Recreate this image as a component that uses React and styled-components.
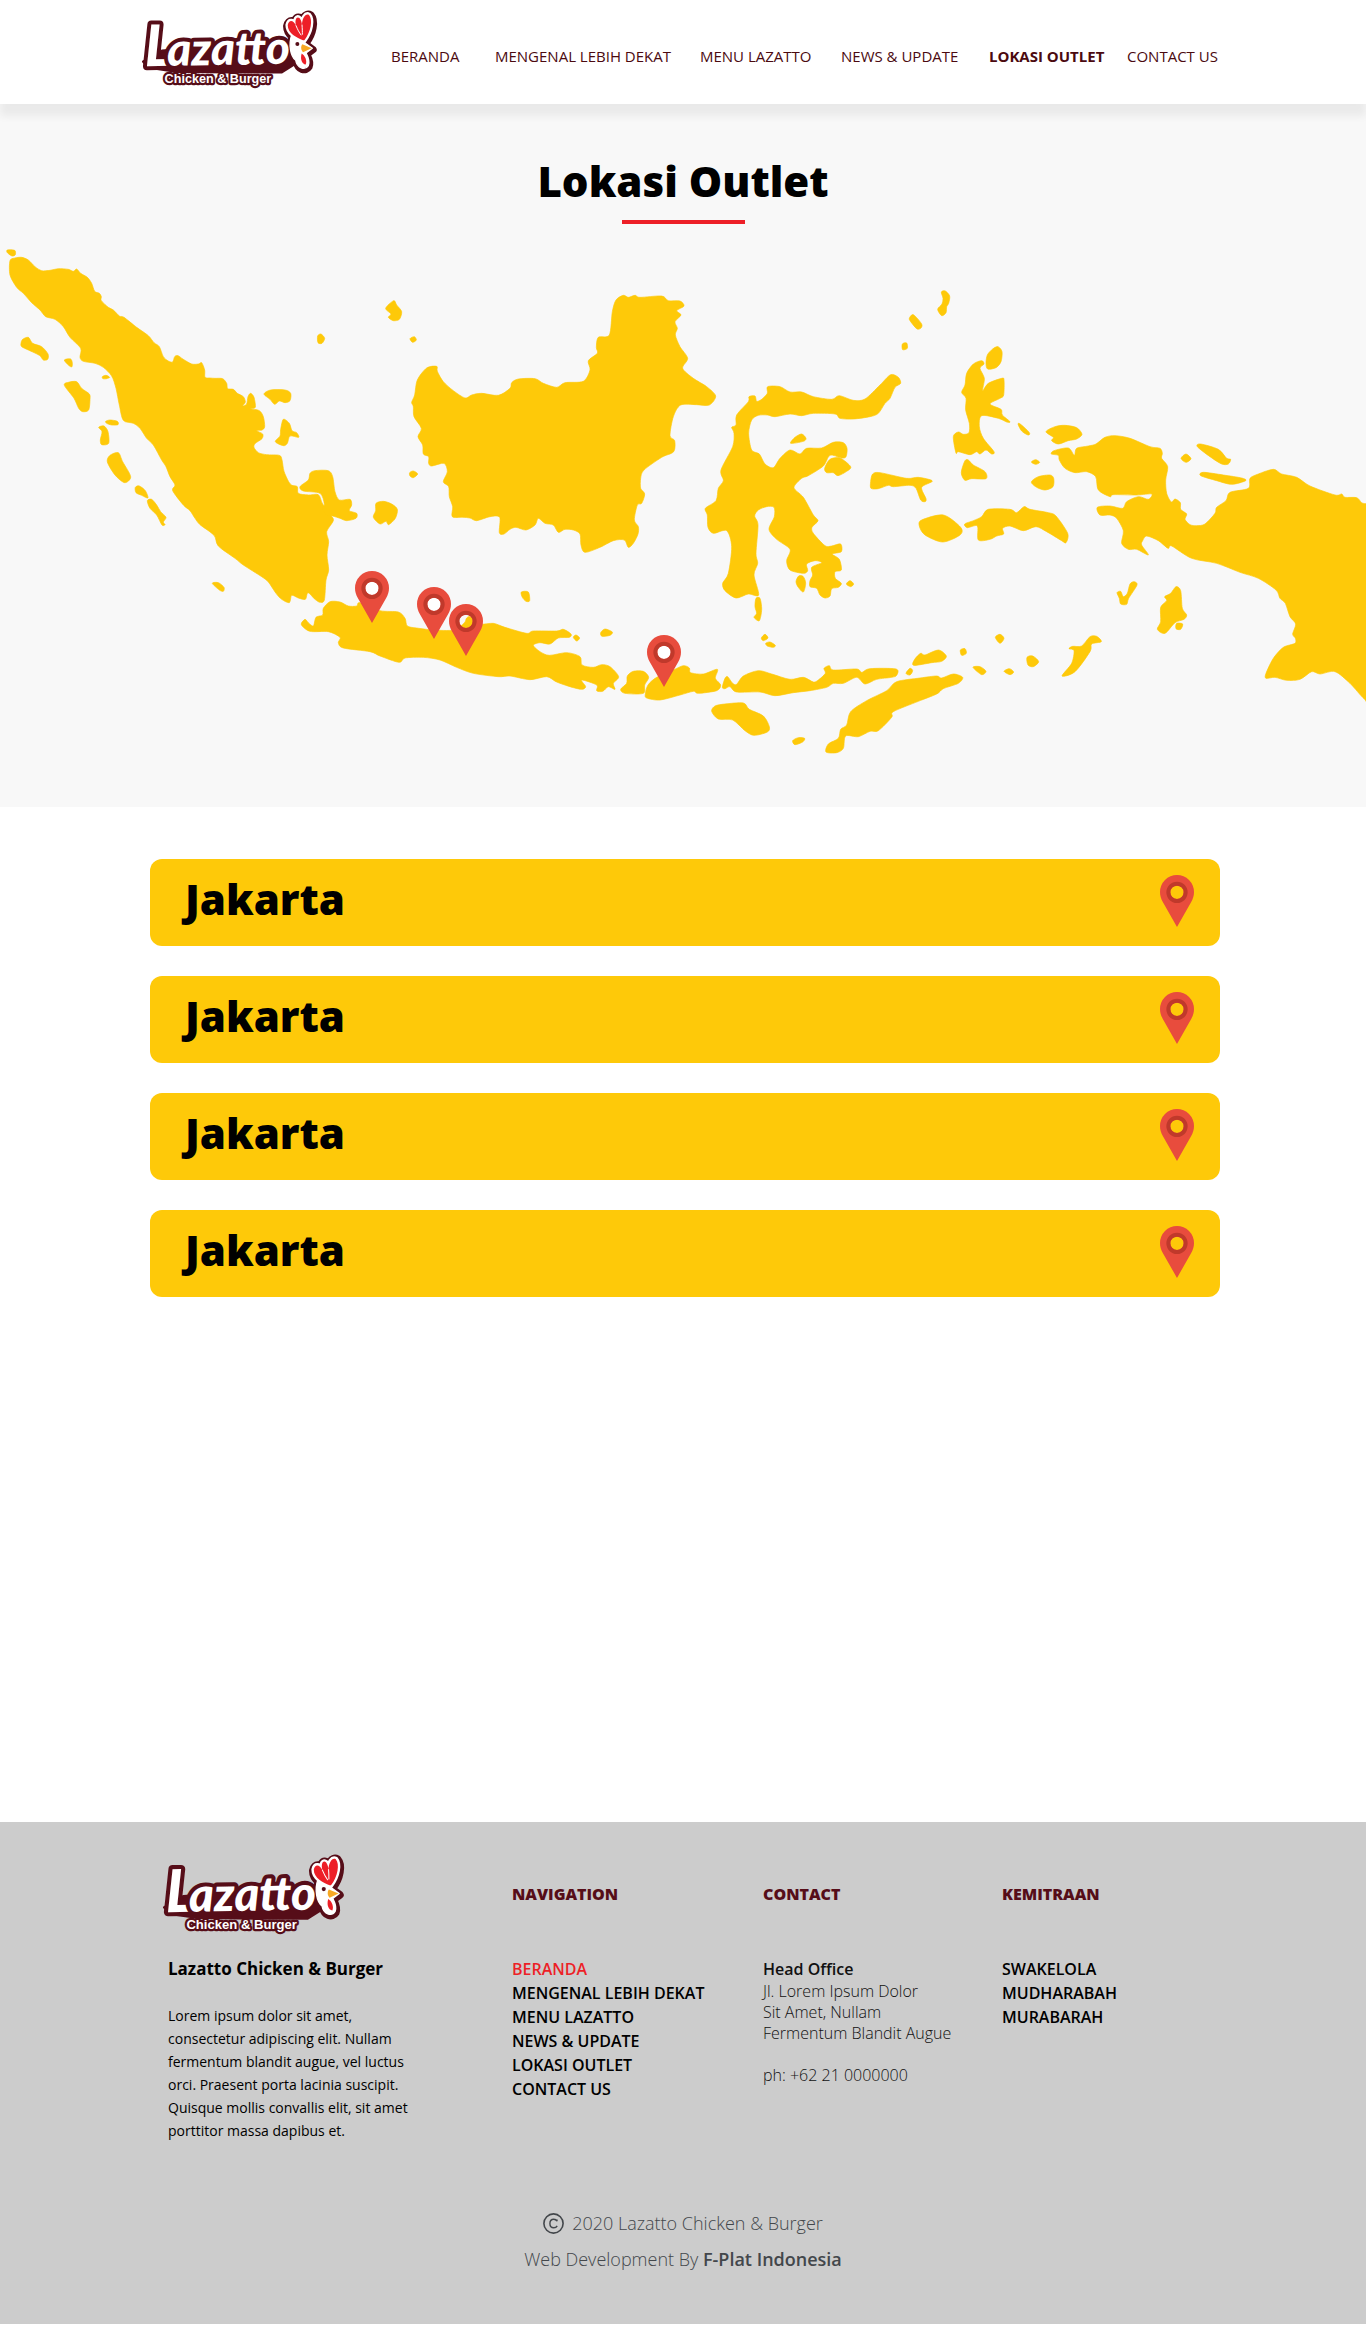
import React from "react";
import styled, { createGlobalStyle } from "styled-components";

const color = {
  yellow: "#fec909",
  maroon: "#4b0a10",
  wine: "#560d18",
  red: "#ed1f27",
  pin: "#e84c3d",
  pinRing: "#c0392b",
  hero: "#f8f8f8",
  footer: "#cccccc",
  slate: "#43474b",
};

const GlobalStyle = createGlobalStyle`
  *, *::before, *::after { box-sizing: border-box; }
  body {
    margin: 0;
    background: #fff;
    color: #000;
    font-family: "Open Sans", "Noto Sans", sans-serif;
  }
  h1, h2, h3, p, ul { margin: 0; padding: 0; }
  ul { list-style: none; }
  a { color: inherit; text-decoration: none; }
`;

const Header = styled.header`
  position: relative;
  z-index: 1;
  display: flex;
  align-items: center;
  justify-content: space-between;
  min-height: 104px;
  padding: 0 150px 0 142px;
  background: #fff;
  box-shadow: 0 12px 8px rgba(0, 0, 0, 0.057);
`;

const LogoLink = styled.a`
  display: block;
  line-height: 0;
`;

const HeaderLogo = styled(LogoLink)`
  padding-bottom: 4px;
`;

const LogoSvg = styled.svg`
  overflow: visible;
`;

const Nav = styled.nav`
  display: grid;
  grid-template-columns: 104px 205px 141px 148px 138px 89px;
  padding-top: 8px;
`;

const NavLink = styled.a`
  color: ${color.maroon};
  font-size: 15px;
  line-height: 20px;
  font-weight: ${(p) => (p.$active ? 700 : 400)};
  white-space: nowrap;
`;

const Hero = styled.section`
  display: flex;
  flex-direction: column;
  align-items: center;
  padding-top: 47px;
  background: ${color.hero};
`;

const Title = styled.h1`
  font-size: 42px;
  line-height: 60px;
  font-weight: 800;
`;

const Underline = styled.div`
  width: 123px;
  height: 4px;
  margin: 9px 0 16px;
  background: ${color.red};
`;

const MapFrame = styled.div`
  position: relative;
  width: 100%;
`;

const MapSvg = styled.svg`
  display: block;
  width: 100%;
  height: auto;
`;

const MapPin = styled.button`
  position: absolute;
  left: ${(p) => p.$x}%;
  top: ${(p) => p.$y}%;
  transform: translate(-50%, -100%);
  padding: 0;
  border: 0;
  background: none;
  line-height: 0;
  cursor: pointer;
`;

const Outlets = styled.main`
  display: flex;
  flex-direction: column;
  gap: 30px;
  padding: 52px 146px 525px 150px;
`;

const OutletRow = styled.button`
  display: flex;
  align-items: center;
  justify-content: space-between;
  width: 100%;
  height: 87px;
  padding: 0 26px 4px 35px;
  border: 0;
  border-radius: 12px;
  background: ${color.yellow};
  color: #000;
  font: 800 42px/60px "Open Sans", "Noto Sans", sans-serif;
  text-align: left;
  cursor: pointer;
`;

const OutletName = styled.span`
  padding-bottom: 4px;
`;

const Footer = styled.footer`
  background: ${color.footer};
  padding: 33px 146px 47px 163px;
`;

const FooterColumns = styled.div`
  display: grid;
  grid-template-columns: 349px 251px 239px 1fr;
  min-height: 308px;
`;

const About = styled.div`
  padding-right: 80px;
`;

const AboutText = styled.div`
  padding-left: 5px;
`;

const Brand = styled.h3`
  margin-top: 21px;
  font-size: 17px;
  line-height: 24px;
  font-weight: 700;
  white-space: nowrap;
`;

const Blurb = styled.p`
  width: 250px;
  margin-top: 23px;
  font-size: 14px;
  line-height: 23px;
`;

const FooterHeading = styled.h2`
  margin: 27px 0 51px;
  color: ${color.wine};
  font-size: 16px;
  line-height: 24px;
  font-weight: 800;
`;

const FooterLink = styled.a`
  display: block;
  color: ${(p) => (p.$active ? color.red : "#000")};
  font-size: 16px;
  line-height: 24px;
  font-weight: 600;
  white-space: nowrap;
`;

const Address = styled.address`
  color: #111;
  font-size: 16px;
  line-height: 21px;
  font-style: normal;
  font-weight: 300;
`;

const Office = styled.h3`
  font-size: 16px;
  line-height: 24px;
  font-weight: 600;
`;

const Phone = styled.p`
  margin-top: 21px;
`;

const Legal = styled.div`
  display: flex;
  flex-direction: column;
  align-items: center;
  padding: 42px 17px 0 0;
  color: ${color.slate};
  font-size: 18px;
  line-height: 36px;
  font-weight: 300;
`;

const LegalLine = styled.p`
  display: flex;
  align-items: center;
  gap: 8px;
`;

const Strong = styled.strong`
  font-weight: 600;
`;

/* Closed Catmull-Rom curve through a list of "x,y" points. */
const smooth = (list) => {
  const pts = list.split(" ").map((p) => p.split(",").map(Number));
  const n = pts.length;
  const at = (i) => pts[(i + n) % n];
  let d = `M${pts[0].join(" ")}`;
  for (let i = 0; i < n; i += 1) {
    const [a, b, c, e] = [at(i - 1), at(i), at(i + 1), at(i + 2)];
    const c1 = [b[0] + (c[0] - a[0]) / 7, b[1] + (c[1] - a[1]) / 7];
    const c2 = [c[0] - (e[0] - b[0]) / 7, c[1] - (e[1] - b[1]) / 7];
    d += `C${c1.join(" ")} ${c2.join(" ")} ${c.join(" ")}`;
  }
  return `${d}Z`;
};

/* Island groups, drawn at three times the map's own unit. */
const regions = [
  {
    origin: [0, 230],
    shapes: [
      "30,92 45,84 65,82 85,90 105,110 125,122 150,121 175,116 205,118 220,124 230,117 242,130 262,142 275,160 284,184 298,190 304,200 304,212 325,232 340,240 358,258 372,262 410,292 445,317 462,338 478,350 490,380 505,393 518,396 524,380 534,377 550,388 575,402 595,402 605,398 614,420 615,442 630,444 645,445 668,446 680,460 683,476 700,478 712,490 730,500 736,516 728,528 740,522 744,500 752,490 762,502 766,532 752,536 778,542 790,560 794,590 786,600 770,602 788,612 786,626 766,640 762,652 775,668 800,674 838,676 846,690 852,724 866,755 876,766 892,770 895,790 925,795 955,794 968,822 992,855 1000,872 980,905 986,935 981,975 986,1020 978,1050 973,1110 960,1117 945,1108 924,1088 916,1108 895,1104 875,1096 868,1118 845,1108 828,1090 805,1056 785,1040 730,1005 705,985 655,948 642,916 600,884 585,865 570,842 550,825 518,782 525,765 510,740 498,710 485,690 460,645 440,625 420,595 400,580 370,571 358,525 348,475 335,438 310,412 285,400 250,394 240,382 242,355 210,322 190,290 165,268 137,260 120,240 95,218 70,190 50,172 30,135",
      "22,60 44,61 46,74 36,78 22,68",
      "63,340 68,328 85,322 98,340 125,350 144,372 143,388 130,390 118,376 85,360 65,350",
      "193,390 212,387 217,400 215,411 205,405",
      "307,440 318,436 329,442 320,446 309,446",
      "193,466 205,457 230,455 245,475 268,492 270,508 266,540 248,545 236,535 222,505",
      "317,574 330,570 352,574 354,584 335,585 320,580",
      "296,592 312,588 324,605 326,640 305,644 301,630 306,605",
      "330,676 355,668 368,695 392,740 374,758 345,735 322,696",
      "406,772 418,768 436,782 444,804 425,796 408,788",
      "442,812 455,808 470,825 482,845 498,862 490,876 495,884 486,885 470,855 450,835",
      "637,1060 655,1058 672,1072 670,1084 658,1080",
      "953,318 963,312 974,325 966,340 954,338",
      "792,492 812,480 855,480 872,490 870,512 855,518 838,513 824,523 810,508",
      "850,568 868,580 876,602 890,608 896,622 870,618 862,640 850,647 826,635 840,618 842,598",
    ],
  },
  {
    origin: [280, 270],
    shapes: [
      "60,650 85,630 90,610 105,602 145,602 158,620 165,665 178,690 210,688 215,705 208,722 230,730 228,745 200,752 180,745 158,738 140,735 128,716 133,702 120,670 70,663",
      "317,115 341,92 350,105 365,125 358,148 340,152 325,142 333,132",
      "390,206 403,200 409,210 398,217",
      "389,608 400,603 413,612 400,623 390,618",
      "288,700 310,694 335,702 352,718 346,745 326,764 318,754 300,762 280,742 287,722",
      "440,294 470,289 472,304 490,335 520,362 555,384 575,375 605,370 655,376 690,355 695,338 715,327 765,326 790,340 830,352 855,338 910,334 930,300 925,272 952,250 949,232 955,202 988,195 997,125 1008,90 1030,76 1045,82 1065,76 1080,82 1145,78 1165,92 1200,93 1212,108 1190,122 1203,135 1185,155 1192,175 1186,195 1200,230 1223,265 1208,295 1240,325 1280,350 1307,378 1288,405 1250,404 1202,405 1180,440 1170,497 1184,512 1181,545 1145,562 1092,600 1082,625 1082,655 1094,672 1085,700 1072,705 1063,750 1075,770 1074,792 1060,820 1045,832 1033,810 1000,812 960,832 915,847 903,825 900,792 880,780 855,778 835,787 820,765 795,760 775,745 765,765 738,780 708,772 690,778 672,792 658,788 659,742 630,740 590,752 570,744 548,742 517,740 518,710 508,680 506,650 490,635 502,605 492,580 455,588 446,580 446,560 430,552 428,525 414,500 424,475 402,440 400,410 395,397 404,375 412,330",
      "150,995 180,996 205,1008 230,1008 240,998 300,1022 355,1026 375,1045 382,1068 410,1074 460,1080 520,1080 552,1060 560,1044 572,1040 600,1062 640,1060 675,1072 740,1090 760,1083 830,1083 850,1078 873,1092 868,1102 835,1104 810,1122 780,1118 760,1126 780,1145 808,1156 860,1148 900,1160 906,1185 940,1192 965,1184 990,1190 1016,1220 1000,1240 1005,1258 985,1250 968,1264 950,1262 950,1245 905,1230 917,1250 905,1258 870,1250 830,1236 800,1220 750,1229 690,1218 655,1220 580,1210 530,1192 480,1170 430,1162 375,1164 357,1177 300,1158 270,1145 190,1134 175,1118 180,1102 145,1085 90,1084 64,1064 75,1048 85,1058 100,1068 108,1042 128,1035 130,1015",
      "724,966 745,966 749,992 738,994 727,982",
      "880,1102 888,1095 899,1104 890,1113",
      "962,1088 975,1077 997,1086 990,1096 966,1099",
      "1022,1258 1040,1240 1042,1218 1060,1204 1090,1204 1106,1222 1094,1245 1090,1270 1035,1270",
      "1096,1272 1104,1245 1130,1222 1180,1200 1210,1187 1228,1194 1232,1208 1270,1212 1312,1198 1306,1225 1322,1245 1310,1262 1255,1270 1240,1264 1200,1275 1140,1290 1100,1284",
    ],
  },
  {
    origin: [680, 270],
    shapes: [
      "127,1252 135,1225 143,1220 158,1240 170,1243 190,1218 235,1202 275,1212 330,1228 370,1222 400,1236 415,1230 436,1210 432,1195 448,1187 460,1200 530,1197 545,1207 570,1196 648,1197 650,1216 635,1222 590,1228 555,1242 530,1222 490,1240 460,1240 440,1252 390,1262 340,1268 285,1277 240,1266 170,1266 150,1250 135,1256",
      "95,1324 105,1308 135,1302 190,1299 208,1318 250,1338 268,1370 262,1386 222,1396 195,1382 158,1350 115,1347",
      "338,1412 355,1403 374,1405 368,1416 345,1424",
      "438,1446 445,1422 475,1405 482,1378 500,1365 512,1325 560,1292 620,1262 650,1235 720,1224 770,1218 785,1224 820,1212 848,1222 835,1240 790,1256 770,1272 715,1294 640,1325 635,1342 595,1382 570,1384 535,1400 497,1398 490,1435 470,1448",
      "678,1210 690,1195 698,1202 690,1215",
      "701,1186 704,1168 722,1150 735,1155 775,1140 799,1158 785,1174 755,1178",
      "841,1140 855,1136 859,1150 845,1156",
      "879,1192 900,1190 918,1204 905,1214",
      "946,1102 960,1093 972,1105 960,1120",
      "972,1204 988,1196 1001,1206 990,1214",
      "263,350 300,350 330,366 365,366 400,380 455,388 478,377 520,391 555,387 600,345 632,314 655,322 662,340 645,352 630,385 615,400 595,430 570,440 520,447 480,445 465,432 400,430 365,437 330,432 285,440 262,435 235,436 215,450 206,490 215,540 238,552 255,582 280,593 300,565 330,540 360,552 380,535 425,534 460,517 490,518 501,535 498,560 485,564 450,556 430,588 385,617 365,625 342,653 370,682 400,735 414,752 396,772 400,790 435,827 455,828 482,822 484,845 457,852 478,868 484,900 465,905 466,925 484,940 475,952 455,956 450,978 435,984 420,975 410,955 390,950 390,932 398,915 395,892 425,878 405,872 380,882 383,902 370,910 330,900 320,872 330,838 290,808 267,778 283,740 282,712 260,710 235,720 224,738 234,765 228,850 233,880 222,915 236,975 205,972 168,984 135,962 128,940 145,910 155,830 140,782 100,790 84,772 82,735 76,715 108,692 115,655 130,632 123,600 158,530 162,490 155,472 168,465 170,435 205,395 207,380 225,378 230,394 245,388 262,370",
      "332,520 345,502 365,492 378,505 370,514",
      "434,595 450,568 480,564 512,590 500,604 474,617 460,608 440,608",
      "348,935 356,918 370,920 377,940 370,966 355,952",
      "499,942 510,932 521,942 512,950",
      "228,985 240,985 245,1018 238,1052 222,1042 230,1030 225,1010",
      "244,1104 255,1093 264,1104 250,1112",
      "257,1120 270,1116 286,1126 280,1132 262,1128",
      "784,66 796,63 809,78 806,100 800,110 798,128 785,137 773,118 786,102 789,85",
      "688,145 700,134 725,162 722,175 710,176 692,155",
      "667,222 680,219 682,235 668,239",
      "578,612 600,608 680,625 715,622 757,633 725,652 738,686 735,695 722,690 708,655 690,646 640,650 625,646 595,656 573,655 572,635",
      "718,768 725,750 790,735 842,772 840,795 788,816 735,795",
    ],
  },
  {
    origin: [930, 270],
    shapes: [
      "155,272 162,282 150,295 163,325 158,362 175,340 215,325 222,330 221,375 210,385 180,402 213,418 217,435 240,455 230,456 205,445 155,437 148,470 160,505 192,545 185,552 168,540 150,552 140,545 120,554 85,545 78,549 70,500 85,486 100,493 117,488 118,460 107,420 108,385 95,367 105,345 110,310 130,282",
      "204,230 216,245 213,275 198,293 173,297 168,280 172,255 188,237",
      "264,462 272,463 298,488 294,495 275,483",
      "95,600 105,572 115,570 130,585 165,605 168,626 125,626 105,631 95,615",
      "104,762 130,752 155,740 175,718 240,718 260,728 282,710 300,718 355,728 378,738 413,790 408,818 395,812 350,785 318,770 280,782 240,768 218,775 221,792 200,798 180,808 145,810 142,768 112,773",
      "348,485 375,470 405,466 440,473 456,493 440,507 415,512 385,522 365,512 370,502",
      "304,576 317,569 329,577 317,583",
      "304,636 325,620 360,615 371,625 369,650 345,660 320,652",
      "364,552 372,542 415,534 433,556 440,535 475,528 498,522 525,502 555,497 600,505 660,530 690,535 697,550 695,565 713,590 707,630 710,670 724,696 735,687 751,698 752,718 770,732 765,748 780,764 800,767 825,762 855,730 860,712 888,692 900,667 955,655 960,625 985,612 1030,598 1055,612 1100,622 1140,648 1215,675 1235,672 1245,682 1280,683 1295,698 1308,701 1330,701 1340,1000 1330,1298 1302,1286 1260,1240 1215,1205 1170,1212 1145,1205 1110,1228 1070,1231 1035,1222 1008,1225 1008,1210 1030,1165 1060,1132 1095,1120 1096,1105 1088,1092 1097,1062 1080,1040 1066,1000 1050,985 1038,960 985,925 930,907 860,880 785,865 725,828 714,835 685,812 650,798 638,812 635,825 655,855 620,838 595,838 575,820 580,782 560,745 540,735 510,735 502,712 540,708 578,715 590,695 625,680 655,688 665,672 620,675 550,674 540,680 505,660 497,620 470,605 435,608 405,595 388,570 385,556",
      "802,530 812,522 865,538 890,565 902,568 895,582 875,582 840,560",
      "753,565 768,552 783,566 768,577",
      "812,617 820,607 880,615 935,624 947,632 905,643 860,632",
      "561,968 572,964 580,980 592,970 600,942 612,935 621,945 596,985 590,1003 572,1002 568,985",
      "738,950 752,962 757,1015 770,1035 762,1048 735,1058 705,1090 682,1078 692,1055 692,1012 710,992 704,980 722,970",
      "740,1060 758,1062 752,1078 738,1076",
      "396,1218 425,1180 432,1142 417,1136 428,1129 455,1128 480,1100 500,1099 514,1115 485,1122 480,1145 435,1205",
      "291,1162 308,1158 326,1175 310,1190 294,1185",
    ],
  },
];

const MAP = { top: 240, width: 1366, height: 567 };

const mapPins = [
  { x: 372, y: 623, hole: "#fff" },
  { x: 434, y: 639, hole: "#fff" },
  { x: 466, y: 656, hole: "none" },
  { x: 664, y: 687, hole: "#fff" },
];

const navItems = [
  "BERANDA",
  "MENGENAL LEBIH DEKAT",
  "MENU LAZATTO",
  "NEWS & UPDATE",
  "LOKASI OUTLET",
  "CONTACT US",
];
const partnerItems = ["SWAKELOLA", "MUDHARABAH", "MURABARAH"];
const outlets = ["Jakarta", "Jakarta", "Jakarta", "Jakarta"];

function Pin({ hole = "none" }) {
  return (
    <svg width="34" height="52" viewBox="0 0 102 156" aria-hidden="true">
      {hole !== "none" && <circle cx="51" cy="52" r="22" fill={hole} />}
      <path
        fill={color.pin}
        fillRule="evenodd"
        d="M51 156 8 80C3 71 0 62 0 51a51 51 0 0 1 102 0c0 11-3 20-8 29ZM51 32a20 20 0 1 0 0 40 20 20 0 1 0 0-40Z"
      />
      <circle cx="51" cy="52" r="26" fill="none" stroke={color.pinRing} strokeWidth="12" />
    </svg>
  );
}

const comb =
  "M484 88C466 80 438 68 438 42 442 24 456 28 463 44 458 24 466 14 474 22 478 28 480 34 481 42 481 22 492 6 502 12 514 26 508 62 488 88Z";
const head =
  "M450 72C440 100 446 136 462 148 466 172 490 180 500 164 506 150 498 136 493 126L512 112 490 96 488 80Z";

function Logo({ width }) {
  return (
    <LogoSvg width={width} viewBox="0 0 520 234" role="img" aria-label="Lazatto Chicken &amp; Burger">
      <g strokeLinejoin="round" strokeLinecap="round">
        <g fill={color.wine} stroke={color.wine} transform="translate(2 4)">
          <path d={comb} strokeWidth="32" />
          <path d={head} strokeWidth="22" />
        </g>
        <path
          d="M4 152 20 170 100 182 280 184 420 184 458 160 440 92 300 100 60 120Z"
          fill={color.wine}
          stroke={color.wine}
          strokeWidth="8"
        />
        <text
          x="9"
          y="166"
          fontFamily='Lato, "Open Sans", sans-serif'
          fontWeight="900"
          fontStyle="italic"
          fontSize="138"
          fill="#fff"
          stroke={color.wine}
          strokeWidth="24"
          paintOrder="stroke"
          transform="rotate(-1 9 166)"
        >
          <tspan fontSize="172">L</tspan>
          <tspan dx="-16">azatto</tspan>
        </text>
        <path d={comb} fill="#fff" stroke="#fff" strokeWidth="14" />
        <path d={head} fill="#fff" stroke="#fff" strokeWidth="4" />
        <path d={comb} fill={color.red} />
        <path d="M463 44C468 56 472 64 478 72M481 42C482 54 482 62 482 70" fill="none" stroke="#fff" strokeWidth="3" />
        <path d="M480 128C490 134 497 150 492 161 480 160 475 144 480 128Z" fill={color.red} />
        <path d="M482 100 510 112 484 124C477 117 477 106 482 100Z" fill="#f7a823" />
        <circle cx="467" cy="99" r="6" fill={color.wine} />
      </g>
      <text
        x="68"
        y="216"
        fontFamily='"Liberation Sans", Arial, sans-serif'
        fontWeight="700"
        fontSize="38"
        strokeLinejoin="round"
        fill="#fff"
        stroke={color.wine}
        strokeWidth="13"
        paintOrder="stroke"
      >
        Chicken &amp; Burger
      </text>
    </LogoSvg>
  );
}

function CopyrightMark() {
  return (
    <svg width="21" height="21" viewBox="0 0 21 21" fill="none" stroke={color.slate} aria-hidden="true">
      <circle cx="10.5" cy="10.5" r="9.6" strokeWidth="1.6" />
      <path
        d="M14 8.200V6.400M14 8.200C13.400 6.900 12.200 6.200 10.800 6.200 8.300 6.200 6.900 8.100 6.900 10.500 6.900 13 8.500 14.800 10.800 14.800 12.300 14.800 13.500 14.100 14.200 12.800"
        strokeWidth="1.400"
      />
    </svg>
  );
}

function OutletMap() {
  return (
    <MapFrame>
      <MapSvg
        viewBox={`0 ${MAP.top} ${MAP.width} ${MAP.height}`}
        fill={color.yellow}
        stroke={color.yellow}
        strokeWidth="2"
        strokeLinejoin="round"
        aria-hidden="true"
      >
        {regions.map(({ origin, shapes }) => (
          <g key={origin[0]} transform={`translate(${origin.join(" ")}) scale(${1 / 3})`}>
            {shapes.map((s) => (
              <path key={s} d={smooth(s)} />
            ))}
          </g>
        ))}
      </MapSvg>
      {mapPins.map(({ x, y, hole }) => (
        <MapPin
          key={x}
          type="button"
          aria-label="Outlet"
          $x={(x / MAP.width) * 100}
          $y={((y - MAP.top) / MAP.height) * 100}
        >
          <Pin hole={hole} />
        </MapPin>
      ))}
    </MapFrame>
  );
}

export default function App() {
  return (
    <>
      <GlobalStyle />
      <Header>
        <HeaderLogo href="#beranda">
          <Logo width={173} />
        </HeaderLogo>
        <Nav>
          {navItems.map((item) => (
            <NavLink key={item} href="#" $active={item === "LOKASI OUTLET"}>
              {item}
            </NavLink>
          ))}
        </Nav>
      </Header>

      <Hero>
        <Title>Lokasi Outlet</Title>
        <Underline />
        <OutletMap />
      </Hero>

      <Outlets>
        {outlets.map((name, i) => (
          <OutletRow key={i} type="button">
            <OutletName>{name}</OutletName>
            <Pin />
          </OutletRow>
        ))}
      </Outlets>

      <Footer>
        <FooterColumns>
          <About>
            <LogoLink href="#beranda">
              <Logo width={179} />
            </LogoLink>
            <AboutText>
              <Brand>Lazatto Chicken &amp; Burger</Brand>
              <Blurb>
                Lorem ipsum dolor sit amet, consectetur adipiscing elit. Nullam fermentum blandit
                augue, vel luctus orci. Praesent porta lacinia suscipit. Quisque mollis convallis
                elit, sit amet porttitor massa dapibus et.
              </Blurb>
            </AboutText>
          </About>
          <nav>
            <FooterHeading>NAVIGATION</FooterHeading>
            {navItems.map((item) => (
              <FooterLink key={item} href="#" $active={item === "BERANDA"}>
                {item}
              </FooterLink>
            ))}
          </nav>
          <div>
            <FooterHeading>CONTACT</FooterHeading>
            <Address>
              <Office>Head Office</Office>
              <p>Jl. Lorem Ipsum Dolor</p>
              <p>Sit Amet, Nullam</p>
              <p>Fermentum Blandit Augue</p>
              <Phone>ph: +62 21 0000000</Phone>
            </Address>
          </div>
          <div>
            <FooterHeading>KEMITRAAN</FooterHeading>
            {partnerItems.map((item) => (
              <FooterLink key={item} href="#">
                {item}
              </FooterLink>
            ))}
          </div>
        </FooterColumns>
        <Legal>
          <LegalLine>
            <CopyrightMark />
            2020 Lazatto Chicken &amp; Burger
          </LegalLine>
          <p>
            Web Development By <Strong>F-Plat Indonesia</Strong>
          </p>
        </Legal>
      </Footer>
    </>
  );
}
